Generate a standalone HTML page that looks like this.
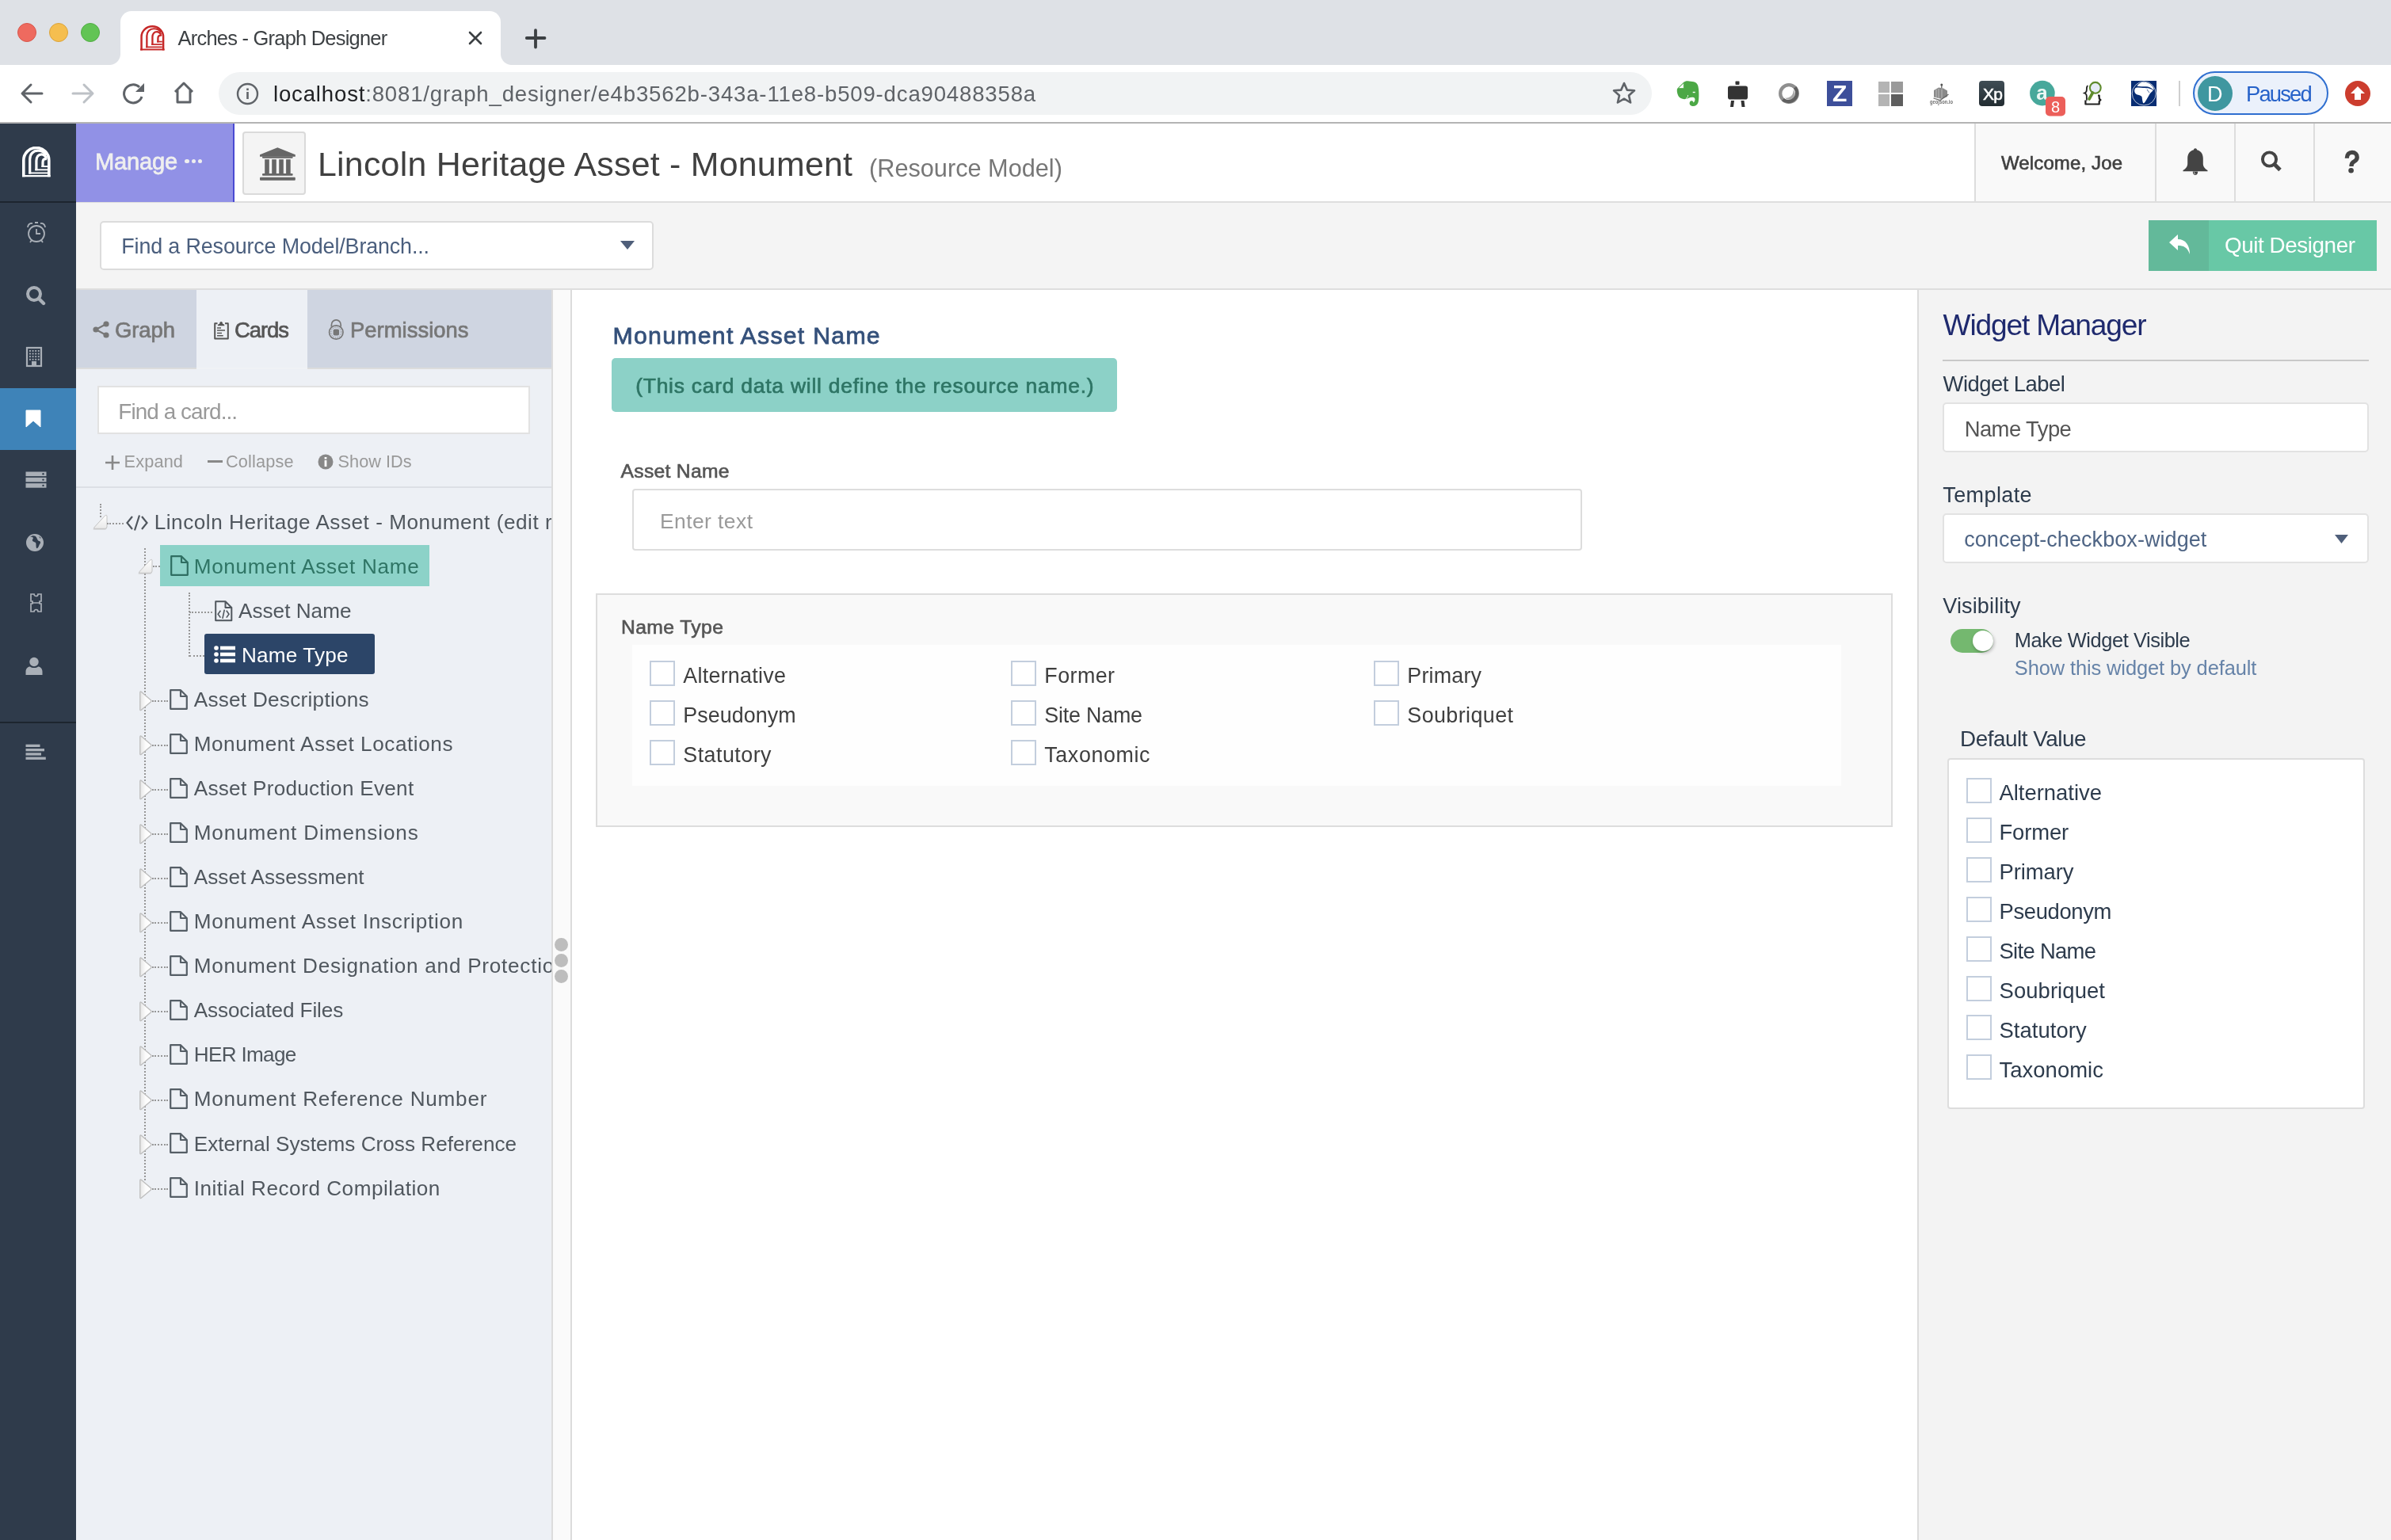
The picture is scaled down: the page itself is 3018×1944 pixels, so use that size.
<!DOCTYPE html><html><head><meta charset="utf-8"><style>
html,body{margin:0;padding:0;width:3018px;height:1944px;overflow:hidden;background:#fff}
#R{position:absolute;left:0;top:0;width:3018px;height:1944px;overflow:hidden;will-change:transform}
#R>div,#R>svg{position:absolute;white-space:nowrap;line-height:normal}
body{font-family:"Liberation Sans",sans-serif}
</style></head><body><div id="R">
<div style="left:0px;top:0px;width:3018px;height:82px;background:#dee1e6;"></div>
<div style="left:22px;top:29px;width:24px;height:24px;border-radius:50%;background:#ee6a5f;box-sizing:border-box;border:1px solid #d8574c"></div>
<div style="left:62px;top:29px;width:24px;height:24px;border-radius:50%;background:#f5be4f;box-sizing:border-box;border:1px solid #dba43b"></div>
<div style="left:102px;top:29px;width:24px;height:24px;border-radius:50%;background:#62c454;box-sizing:border-box;border:1px solid #52ad45"></div>
<div style="left:152px;top:14px;width:480px;height:68px;background:#fff;border-radius:14px 14px 0 0"></div>
<div style="left:138px;top:68px;width:14px;height:14px;background:radial-gradient(circle at 0 0,transparent 13.5px,#fff 14.5px)"></div>
<div style="left:632px;top:68px;width:14px;height:14px;background:radial-gradient(circle at 100% 0,transparent 13.5px,#fff 14.5px)"></div>
<svg style="left:176.5px;top:31.5px;" width="31" height="32" viewBox="0 0 36 39" preserveAspectRatio="none"><g fill="none" stroke="#c62828">
<path d="M1.8 38.3 V17.45 A16 16 0 0 1 33.8 17.45 V38.3" stroke-width="2.9"/>
<path d="M0 37.2 H35.6" stroke-width="2.4"/>
<path d="M9.7 34.4 V16 C9.7 9.5 14 5.2 20 5.2 C24.5 5.2 28.5 7.5 30.6 10.6" stroke-width="2.7"/>
<path d="M8.1 33.4 H32.2" stroke-width="2.1"/>
<path d="M17.9 30.3 V18 C17.9 13 20.5 9.8 24.5 9.8 C27 9.8 29 11.5 30.6 14.2" stroke-width="2.7"/>
<path d="M16.3 29.3 H32.2" stroke-width="2.1"/>
<path d="M26 26.1 V20 C26 17 27.6 15.3 30 15.3 L31.3 15.9" stroke-width="2.7"/>
<path d="M24.4 25.1 H32.2" stroke-width="2.1"/>
</g></svg>
<div style="left:224.60px;top:33.50px;font-size:25.43px;font-weight:400;color:#3c4043;letter-spacing:-0.752px;">Arches - Graph Designer</div>
<svg style="left:590px;top:38px;" width="20" height="20" viewBox="0 0 20 20" preserveAspectRatio="none"><path d="M3 3 L17 17 M17 3 L3 17" stroke="#3c4043" stroke-width="2.6" stroke-linecap="round"/></svg>
<svg style="left:662px;top:34px;" width="28" height="28" viewBox="0 0 28 28" preserveAspectRatio="none"><path d="M14 4.2 V25.5 M2.8 14 H25.5" stroke="#3c4043" stroke-width="3.8" stroke-linecap="round"/></svg>
<div style="left:0px;top:82px;width:3018px;height:72px;background:#fff;"></div>
<div style="left:0px;top:154px;width:3018px;height:2px;background:#b4b4b4;"></div>
<svg style="left:24px;top:102px;" width="32" height="32" viewBox="0 0 32 32" preserveAspectRatio="none"><path d="M29 16 H5 M15 5 L4 16 L15 27" fill="none" stroke="#5f6368" stroke-width="3" stroke-linecap="round" stroke-linejoin="round"/></svg>
<svg style="left:89px;top:102px;" width="32" height="32" viewBox="0 0 32 32" preserveAspectRatio="none"><path d="M3 16 H27 M17 5 L28 16 L17 27" fill="none" stroke="#bdc1c6" stroke-width="3" stroke-linecap="round" stroke-linejoin="round"/></svg>
<svg style="left:152px;top:102px;" width="34" height="34" viewBox="0 0 34 34" preserveAspectRatio="none"><path d="M27 20 A11.5 11.5 0 1 1 24 8" fill="none" stroke="#5f6368" stroke-width="3"/><path d="M30 3 V14 H19 Z" fill="#5f6368"/></svg>
<svg style="left:216px;top:102px;" width="32" height="32" viewBox="0 0 32 32" preserveAspectRatio="none"><path d="M5 14 L16 3 L27 14 M8 12 V27 H24 V12" fill="none" stroke="#5f6368" stroke-width="3" stroke-linejoin="round"/></svg>
<div style="left:276px;top:91px;width:1809px;height:54px;border-radius:27px;background:#f1f3f4"></div>
<svg style="left:298px;top:104px;" width="29" height="29" viewBox="0 0 29 29" preserveAspectRatio="none"><circle cx="14.5" cy="14.5" r="12.5" fill="none" stroke="#5f6368" stroke-width="2.4"/><rect x="13.2" y="12" width="2.6" height="9" fill="#5f6368"/><rect x="13.2" y="7.5" width="2.6" height="2.6" fill="#5f6368"/></svg>
<div style="left:345.00px;top:102.60px;font-size:27.60px;font-weight:400;color:#202124;letter-spacing:0.813px;">localhost<span style="color:#5f6368">:8081/graph_designer/e4b3562b-343a-11e8-b509-dca90488358a</span></div>
<svg style="left:2034px;top:102px;" width="32" height="32" viewBox="0 0 32 32" preserveAspectRatio="none"><path d="M16 3 L19.8 11.6 L29 12.3 L22 18.4 L24.1 27.5 L16 22.7 L7.9 27.5 L10 18.4 L3 12.3 L12.2 11.6 Z" fill="none" stroke="#5f6368" stroke-width="2.6" stroke-linejoin="round"/></svg>
<svg style="left:2115px;top:101px;" width="31" height="34" viewBox="0 0 31 34" preserveAspectRatio="none"><path d="M2 11 L10 3 C12 1 15 0.8 17 1.5 C23 1.8 27 3 28.2 7 C29.8 13 29.6 24 28.6 28 C27.6 32 24 33.6 21 33 C17.5 32.4 16.5 28.6 19 26.6 C20.6 25.5 23 26.6 22.2 28.6 C25.2 27 25 23 23 22 C19 21 15.5 23.2 13 24 C9 24.6 5 23.2 3.4 20 C1.6 16 1.5 13 2 11 Z" fill="#4ca846"/><path d="M3.2 10.6 L10.3 3.6 V10.6 Z" fill="#fff" stroke="#4ca846" stroke-width="0.8"/><rect x="21.7" y="14.8" width="3" height="1.4" fill="#fff"/><path d="M12.5 24.2 C14.5 22.5 16 21 15.5 19" fill="none" stroke="#fff" stroke-width="0.9"/></svg>
<svg style="left:2180px;top:102.2px;" width="28" height="34" viewBox="0 0 28 34" preserveAspectRatio="none"><rect x="10.5" y="0.5" width="5" height="4.5" rx="0.8" fill="#333"/><rect x="1" y="6.5" width="25" height="17" rx="2.8" fill="#333"/><path d="M5 25 L4 33 H8 L9 25 Z M17.5 25 L18.5 33 H22.5 L21.5 25 Z" fill="#333"/></svg>
<svg style="left:2244px;top:104px;" width="28" height="28" viewBox="0 0 28 28" preserveAspectRatio="none"><circle cx="14" cy="14" r="10.8" fill="none" stroke="#8f8f8f" stroke-width="4.3"/><path d="M21.6 6.4 A10.8 10.8 0 0 1 6.4 21.6" fill="none" stroke="#606060" stroke-width="4.3"/><path d="M19.5 9 A7 7 0 0 1 9 19.5 A9 9 0 0 0 19.5 9 Z" fill="#a8a8a8"/></svg>
<div style="left:2306px;top:102px;width:32px;height:32px;background:#3d4f9a;"></div>
<div style="left:2313.00px;top:101.00px;font-size:30.00px;font-weight:700;color:#fff;letter-spacing:0.000px;">Z</div>
<svg style="left:2371px;top:102px;" width="31" height="32" viewBox="0 0 31 32" preserveAspectRatio="none"><rect x="0" y="1" width="14" height="14" fill="#b4b4b4"/><rect x="16" y="1" width="15" height="14" fill="#9a9a9a"/><rect x="0" y="17" width="14" height="15" fill="#b4b4b4"/><rect x="16" y="17" width="15" height="15" fill="#5e5e5e"/></svg>
<svg style="left:2434px;top:103px;" width="33" height="30" viewBox="0 0 33 30" preserveAspectRatio="none"><circle cx="16.8" cy="4" r="1.5" fill="#555"/><path d="M16.8 4 V8" stroke="#555" stroke-width="1.2"/><path d="M7 11 L13 7.5 L19 8.5 L24 11.5 V19 L17 22 L7 19.5 Z" fill="#8a8a8a"/><path d="M13 9 V21 M17 9.5 V22 M10 10 V20" stroke="#c8c8c8" stroke-width="0.8"/><path d="M6.5 21 L15 23.5 L25.5 16" fill="none" stroke="#666" stroke-width="1.2"/><text x="2" y="28.3" font-size="8" fill="#6f6f6f" textLength="29" lengthAdjust="spacingAndGlyphs" font-family="Liberation Sans" font-weight="700">geojson.io</text></svg>
<div style="left:2498px;top:102px;width:32px;height:32px;border-radius:4px;background:linear-gradient(#404d55,#222c31)"></div>
<div style="left:2502.90px;top:106.50px;font-size:21.00px;font-weight:400;color:#fff;letter-spacing:-0.772px;-webkit-text-stroke:0.55px #fff;">Xp</div>
<svg style="left:2561px;top:101px;" width="46" height="46" viewBox="0 0 46 46" preserveAspectRatio="none"><circle cx="16.9" cy="16.6" r="15.8" fill="#47a89b"/><text x="16.5" y="25" font-size="26" fill="#eaf7f4" text-anchor="middle" font-family="Liberation Sans" font-weight="700">a</text><rect x="21" y="21" width="25" height="24.5" rx="5" fill="#ec5f5a"/><text x="33.5" y="41" font-size="20" fill="#fff" text-anchor="middle" font-family="Liberation Sans">8</text></svg>
<svg style="left:2629px;top:102px;" width="26" height="32" viewBox="0 0 26 32" preserveAspectRatio="none"><path d="M6.5 6.5 C4.5 6.5 5 9 4.8 12 C4.6 14.5 3.5 15 2 15.5 C3.5 16 4.6 16.6 4.8 19 C5 22 4.5 24.5 5.5 24.5" fill="none" stroke="#222" stroke-width="1.8"/><path d="M3.4 24.6 V29.5 H20.7 V26 C21.2 24.5 22.5 24.5 22.5 24 C21 23.6 20.7 23 20.7 21 V18.5 H19" fill="none" stroke="#222" stroke-width="2.2" stroke-linejoin="round"/><circle cx="15.8" cy="8.8" r="6.9" fill="#e6ecf7" stroke="#5f8b2d" stroke-width="2.1"/><path d="M12.5 15 L8 23" stroke="#5f8b2d" stroke-width="3.6" stroke-linecap="round"/></svg>
<div style="left:2690px;top:102px;width:32px;height:32px;background:#082d73;"></div>
<svg style="left:2690px;top:102px;" width="32" height="32" viewBox="0 0 32 32" preserveAspectRatio="none"><circle cx="16.2" cy="16" r="15" fill="none" stroke="#fff" stroke-width="0.7"/><path d="M5.6 9 C8 8.2 12 8.5 15 9 C18 9.2 21 9 23 9.8 C25 10.5 27 11 27.8 12 C26 14 24 15.5 23 17.5 C21.5 20 20 23 18 26 C17 28 15.5 28.6 15 28 C14 25 14 22 13.5 20 C12 18.5 9.5 17.8 7 17.2 C5 16.5 4 14 4.2 12 C4.4 10.5 5 9.5 5.6 9 Z" fill="#fff"/><path d="M7.5 6.8 C9 4 12 2 15 1.8 C19 1.6 23 3 26 6 C27.5 7.5 28.5 9.5 29 11.5 L27 10.5 C25 8.5 22 7.5 19 7.3 C15 7 11 7.5 7.5 6.8 Z" fill="#fff"/><path d="M20 11 L23 15" stroke="#082d73" stroke-width="0.7"/></svg>
<div style="left:2750px;top:102px;width:2px;height:32px;background:#cfcfcf;"></div>
<div style="left:2768px;top:90px;width:171px;height:55px;box-sizing:border-box;border:2.5px solid #2f6fd0;border-radius:28px;background:#ebf1fb"></div>
<div style="left:2774px;top:96px;width:44px;height:44px;border-radius:50%;background:#3f97a0"></div>
<div style="left:2786.00px;top:104.00px;font-size:27.00px;font-weight:400;color:#fff;letter-spacing:0.000px;">D</div>
<div style="left:2835.00px;top:102.80px;font-size:27.43px;font-weight:400;color:#2662c9;letter-spacing:-1.850px;">Paused</div>
<div style="left:2960px;top:102px;width:32px;height:32px;border-radius:50%;background:#cc3d2e"></div>
<svg style="left:2960px;top:102px;" width="32" height="32" viewBox="0 0 32 32" preserveAspectRatio="none"><path d="M16 7 L25 16 H20 V24 H12 V16 H7 Z" fill="#fff"/></svg>
<svg style="left:0;top:0" width="0" height="0"><defs><linearGradient id="tg" x1="0" y1="0" x2="0" y2="1"><stop offset="0" stop-color="#ffffff"/><stop offset="1" stop-color="#e9e9e9"/></linearGradient><linearGradient id="tg2" x1="0" y1="0" x2="1" y2="0"><stop offset="0" stop-color="#e6e6e6"/><stop offset="0.5" stop-color="#fcfcfc"/><stop offset="1" stop-color="#ffffff"/></linearGradient></defs></svg>
<div style="left:0px;top:156px;width:96px;height:1788px;background:#2f3b4b;"></div>
<div style="left:0px;top:254px;width:96px;height:2px;background:#1d252f;"></div>
<div style="left:0px;top:490px;width:96px;height:78px;background:#3e83b8;"></div>
<div style="left:0px;top:911px;width:96px;height:2px;background:#1d252f;"></div>
<svg style="left:28px;top:184.7px;" width="36" height="39" viewBox="0 0 36 39" preserveAspectRatio="none"><g fill="none" stroke="#ffffff">
<path d="M1.8 38.3 V17.45 A16 16 0 0 1 33.8 17.45 V38.3" stroke-width="3.6"/>
<path d="M0 37.2 H35.6" stroke-width="2.1999999999999997"/>
<path d="M9.7 34.4 V16 C9.7 9.5 14 5.2 20 5.2 C24.5 5.2 28.5 7.5 30.6 10.6" stroke-width="3.2"/>
<path d="M8.1 33.4 H32.2" stroke-width="1.9"/>
<path d="M17.9 30.3 V18 C17.9 13 20.5 9.8 24.5 9.8 C27 9.8 29 11.5 30.6 14.2" stroke-width="3.2"/>
<path d="M16.3 29.3 H32.2" stroke-width="1.9"/>
<path d="M26 26.1 V20 C26 17 27.6 15.3 30 15.3 L31.3 15.9" stroke-width="3.2"/>
<path d="M24.4 25.1 H32.2" stroke-width="1.9"/>
</g></svg>
<svg style="left:33px;top:280px;" width="26" height="28" viewBox="0 0 26 28" preserveAspectRatio="none"><circle cx="13" cy="15" r="10" fill="none" stroke="#a9afb7" stroke-width="1.8"/><path d="M13 9 V15 H18" fill="none" stroke="#a9afb7" stroke-width="1.8"/><path d="M2 7 A5 5 0 0 1 8 2 M18 2 A5 5 0 0 1 24 7 M11 1 H15 M5 26 L7 23 M21 26 L19 23" fill="none" stroke="#a9afb7" stroke-width="1.8"/></svg>
<svg style="left:32px;top:360px;" width="26" height="27" viewBox="0 0 26 27" preserveAspectRatio="none"><circle cx="11" cy="11" r="8" fill="none" stroke="#a9afb7" stroke-width="4"/><path d="M17 17 L23 23" stroke="#a9afb7" stroke-width="4.4" stroke-linecap="round"/></svg>
<svg style="left:32px;top:437px;" width="22" height="27" viewBox="0 0 22 27" preserveAspectRatio="none"><rect x="2" y="2" width="18" height="23" fill="none" stroke="#a9afb7" stroke-width="2.2"/><rect x="5.0" y="5.0" width="1.9" height="1.9" fill="#a9afb7"/><rect x="5.0" y="8.6" width="1.9" height="1.9" fill="#a9afb7"/><rect x="5.0" y="12.2" width="1.9" height="1.9" fill="#a9afb7"/><rect x="5.0" y="15.8" width="1.9" height="1.9" fill="#a9afb7"/><rect x="8.6" y="5.0" width="1.9" height="1.9" fill="#a9afb7"/><rect x="8.6" y="8.6" width="1.9" height="1.9" fill="#a9afb7"/><rect x="8.6" y="12.2" width="1.9" height="1.9" fill="#a9afb7"/><rect x="8.6" y="15.8" width="1.9" height="1.9" fill="#a9afb7"/><rect x="12.2" y="5.0" width="1.9" height="1.9" fill="#a9afb7"/><rect x="12.2" y="8.6" width="1.9" height="1.9" fill="#a9afb7"/><rect x="12.2" y="12.2" width="1.9" height="1.9" fill="#a9afb7"/><rect x="12.2" y="15.8" width="1.9" height="1.9" fill="#a9afb7"/><rect x="15.8" y="5.0" width="1.9" height="1.9" fill="#a9afb7"/><rect x="15.8" y="8.6" width="1.9" height="1.9" fill="#a9afb7"/><rect x="15.8" y="12.2" width="1.9" height="1.9" fill="#a9afb7"/><rect x="15.8" y="15.8" width="1.9" height="1.9" fill="#a9afb7"/><rect x="8" y="19" width="6" height="5" fill="#a9afb7"/></svg>
<svg style="left:32px;top:517px;" width="20" height="23" viewBox="0 0 20 23" preserveAspectRatio="none"><path d="M1 1 H19 V22 L10 14 L1 22 Z" fill="#fff" stroke="#fff" stroke-width="1" stroke-linejoin="round"/></svg>
<svg style="left:32px;top:595px;" width="27" height="22" viewBox="0 0 27 22" preserveAspectRatio="none"><rect x="0.5" y="0.5" width="26" height="5.6" fill="#a9afb7"/><circle cx="22.5" cy="3.3" r="1.2" fill="#2f3b4b"/><rect x="0.5" y="7.8" width="26" height="5.6" fill="#a9afb7"/><circle cx="22.5" cy="10.6" r="1.2" fill="#2f3b4b"/><rect x="0.5" y="15.1" width="26" height="5.6" fill="#a9afb7"/><circle cx="22.5" cy="17.9" r="1.2" fill="#2f3b4b"/></svg>
<svg style="left:32px;top:673px;" width="24" height="24" viewBox="0 0 24 24" preserveAspectRatio="none"><circle cx="12" cy="12" r="11" fill="#a9afb7"/><path d="M6 5 C9 4 11 6 9 8 C8 10 11 11 13 12 C14 14 13 16 14 19 C16 20 17 16 18 14 C20 12 19 10 17 10 C15 9 15 6 13 4 C11 3 8 3 6 5 Z M17 4 C19 5 20 6 19 7" fill="#2f3b4b"/></svg>
<svg style="left:38px;top:749px;" width="15" height="24" viewBox="0 0 15 24" preserveAspectRatio="none"><path d="M1 1 H5 A2.5 2.5 0 0 0 10 1 H14 V10 H12 V13 H14 V23 H10 A2.5 2.5 0 0 0 5 23 H1 V13 H3 V10 H1 Z" fill="none" stroke="#a9afb7" stroke-width="1.7"/><path d="M2 12 H13" stroke="#a9afb7" stroke-width="1.5"/></svg>
<svg style="left:32px;top:829px;" width="22" height="24" viewBox="0 0 22 24" preserveAspectRatio="none"><circle cx="11" cy="6.5" r="5.7" fill="#a9afb7"/><path d="M0.5 23 V19 C0.5 14 4 12.5 6 12.5 C8 14.5 14 14.5 16 12.5 C18 12.5 21.5 14 21.5 19 V23 Z" fill="#a9afb7"/></svg>
<svg style="left:32px;top:939px;" width="27" height="23" viewBox="0 0 27 23" preserveAspectRatio="none"><rect x="0.5" y="0.7" width="18" height="3.3" fill="#a9afb7"/><rect x="0.5" y="6.0" width="23.5" height="3.3" fill="#a9afb7"/><rect x="0.5" y="11.299999999999999" width="19.5" height="3.3" fill="#a9afb7"/><rect x="0.5" y="16.599999999999998" width="25.3" height="3.3" fill="#a9afb7"/></svg>
<div style="left:96px;top:156px;width:2922px;height:98px;background:#fff;"></div>
<div style="left:96px;top:254px;width:2922px;height:2px;background:#dedede;"></div>
<div style="left:96px;top:156px;width:198px;height:99px;background:#9191e6;"></div>
<div style="left:294px;top:156px;width:2px;height:99px;background:#4a4ad2;"></div>
<div style="left:119.90px;top:188.20px;font-size:29.14px;font-weight:400;color:#efefef;letter-spacing:-0.170px;-webkit-text-stroke:0.76px #efefef;">Manage</div>
<div style="left:233.3px;top:200.5px;width:5.4px;height:5.4px;border-radius:50%;background:#efefef"></div>
<div style="left:241.8px;top:200.5px;width:5.4px;height:5.4px;border-radius:50%;background:#efefef"></div>
<div style="left:249.8px;top:200.5px;width:5.4px;height:5.4px;border-radius:50%;background:#efefef"></div>
<div style="left:306px;top:166px;width:80px;height:80px;box-sizing:border-box;border:2px solid #dadada;border-radius:4px;background:#f4f4f4"></div>
<svg style="left:327px;top:185px;" width="47" height="44" viewBox="0 0 47 44" preserveAspectRatio="none"><path d="M23.3 1.3 L45.8 10.3 V12.7 H1 V10.3 Z" fill="#666"/><rect x="4" y="12.5" width="38.6" height="2.2" rx="1" fill="#666"/><rect x="7.2" y="16.2" width="5.6" height="18" fill="#666"/><rect x="16.2" y="16.2" width="5.6" height="18" fill="#666"/><rect x="25.2" y="16.2" width="5.6" height="18" fill="#666"/><rect x="34.1" y="16.2" width="5.6" height="18" fill="#666"/><rect x="4" y="34" width="38.6" height="2.8" rx="1" fill="#666"/><rect x="1" y="38.7" width="44.8" height="4.1" rx="1" fill="#666"/></svg>
<div style="left:401.00px;top:183.00px;font-size:42.86px;font-weight:400;color:#404040;letter-spacing:0.248px;">Lincoln Heritage Asset - Monument</div>
<div style="left:1097.00px;top:195.00px;font-size:30.71px;font-weight:400;color:#777777;letter-spacing:-0.007px;">(Resource Model)</div>
<div style="left:2494px;top:156px;width:524px;height:98px;background:#f9f9f9;"></div>
<div style="left:2492px;top:156px;width:2px;height:98px;background:#dddddd;"></div>
<div style="left:2720px;top:156px;width:2px;height:98px;background:#dddddd;"></div>
<div style="left:2820px;top:156px;width:2px;height:98px;background:#dddddd;"></div>
<div style="left:2920px;top:156px;width:2px;height:98px;background:#dddddd;"></div>
<div style="left:2526.00px;top:191.80px;font-size:24.00px;font-weight:400;color:#404040;letter-spacing:0.125px;-webkit-text-stroke:0.62px #404040;">Welcome, Joe</div>
<svg style="left:2754px;top:186px;" width="34" height="36" viewBox="0 0 34 36" preserveAspectRatio="none"><path d="M17 1.2 C18.6 1.2 19 2.3 19 3.3 C24.2 4.4 26.8 8.6 26.8 14 V20.5 C26.8 24.5 29.2 27 32.5 29 V30.3 H1.5 V29 C4.8 27 7.2 24.5 7.2 20.5 V14 C7.2 8.6 9.8 4.4 15 3.3 C15 2.3 15.4 1.2 17 1.2 Z" fill="#444"/><path d="M13.8 30.5 C13.8 33.5 15.5 35 17 35 C18.5 35 20.2 33.5 20.2 30.5 Z" fill="#444"/><path d="M15.5 31.5 C15.5 33 16.3 33.6 17.2 33.8" fill="none" stroke="#fafafa" stroke-width="0.9"/></svg>
<svg style="left:2853px;top:189px;" width="30" height="30" viewBox="0 0 30 30" preserveAspectRatio="none"><circle cx="11.5" cy="12" r="8.6" fill="none" stroke="#444" stroke-width="3.9"/><path d="M17.5 18 L25 25.5" stroke="#444" stroke-width="5"/></svg>
<svg style="left:2950px;top:186.5px;" width="34" height="36" viewBox="0 0 34 36" preserveAspectRatio="none"><path d="M12.3 12.8 C12.3 7.6 15.3 5.4 18.8 5.4 C22.8 5.4 25.2 8 25.2 11.4 C25.2 15.2 22.3 16.2 20.3 17.7 C18.7 18.9 18 20.2 18 23" fill="none" stroke="#444" stroke-width="5.3"/><circle cx="17.6" cy="28.3" r="3.3" fill="#444"/></svg>
<div style="left:96px;top:256px;width:2922px;height:108px;background:#f4f4f4;"></div>
<div style="left:96px;top:364px;width:2922px;height:2px;background:#dedede;"></div>
<div style="left:126px;top:279px;width:699px;height:62px;box-sizing:border-box;border:2px solid #dcdcdc;border-radius:5px;background:#fff"></div>
<div style="left:153.30px;top:295.80px;font-size:26.86px;font-weight:400;color:#4a5e7d;letter-spacing:-0.129px;">Find a Resource Model/Branch...</div>
<svg style="left:783px;top:304px;" width="18" height="11" viewBox="0 0 18 11" preserveAspectRatio="none"><path d="M0 0 H18 L9 11 Z" fill="#4f5f7a"/></svg>
<div style="left:2712px;top:278px;width:288px;height:64px;background:#68c8a6;"></div>
<div style="left:2712px;top:278px;width:76px;height:64px;background:#63b99a;"></div>
<svg style="left:2737px;top:295px;" width="30" height="27" viewBox="0 0 30 27" preserveAspectRatio="none"><path d="M12 1 L1 11 L12 21 V15 C19 15 24 17 27 26 C27 15 22 7 12 7 Z" fill="#fff"/></svg>
<div style="left:2808.00px;top:294.30px;font-size:27.86px;font-weight:400;color:#ffffff;letter-spacing:-0.446px;">Quit Designer</div>
<div style="left:96px;top:366px;width:600px;height:1578px;background:#edf0f5;"></div>
<div style="left:96px;top:366px;width:152px;height:99px;background:#cfd5e1;"></div>
<div style="left:388px;top:366px;width:308px;height:99px;background:#cfd5e1;"></div>
<div style="left:96px;top:464px;width:152px;height:2px;background:#dcdcdc;"></div>
<div style="left:388px;top:464px;width:308px;height:2px;background:#dcdcdc;"></div>
<div style="left:248px;top:464px;width:140px;height:2px;background:#f0f2f5;"></div>
<div style="left:696px;top:366px;width:2px;height:1578px;background:#dcdcdc;"></div>
<div style="left:698px;top:366px;width:22px;height:1578px;background:#fafafa;"></div>
<div style="left:720px;top:366px;width:2px;height:1578px;background:#dcdcdc;"></div>
<div style="left:700.1px;top:1184.1999999999998px;width:16.8px;height:16.8px;border-radius:50%;background:#bdbdbd"></div>
<div style="left:700.1px;top:1204.3px;width:16.8px;height:16.8px;border-radius:50%;background:#bdbdbd"></div>
<div style="left:700.1px;top:1224.3px;width:16.8px;height:16.8px;border-radius:50%;background:#bdbdbd"></div>
<svg style="left:117px;top:405px;" width="22" height="22" viewBox="0 0 22 22" preserveAspectRatio="none"><circle cx="17" cy="4" r="3.6" fill="#777"/><circle cx="4" cy="11" r="3.6" fill="#777"/><circle cx="17" cy="18" r="3.6" fill="#777"/><path d="M17 4 L4 11 L17 18" fill="none" stroke="#777" stroke-width="2.2"/></svg>
<div style="left:145.00px;top:401.00px;font-size:27.43px;font-weight:400;color:#777;letter-spacing:-0.063px;-webkit-text-stroke:0.71px #777;">Graph</div>
<svg style="left:269px;top:404px;" width="22" height="26" viewBox="0 0 22 26" preserveAspectRatio="none"><path d="M5.5 4.2 H2.2 V23.4 H18.8 V4.2 H15" fill="none" stroke="#555" stroke-width="2" stroke-linejoin="round"/><path d="M5.8 7.3 H14.4 C14.4 5.6 13.4 4.7 12 4.7 C12 3 11.3 2 10.1 2 C8.9 2 8.2 3 8.2 4.7 C6.8 4.7 5.8 5.6 5.8 7.3 Z" fill="#555"/><path d="M5 9.9 H10 M5 13.1 H15 M5 16.5 H11 M5 19.7 H12.7" stroke="#555" stroke-width="1.5"/></svg>
<div style="left:296.00px;top:401.00px;font-size:27.43px;font-weight:400;color:#555555;letter-spacing:-1.041px;-webkit-text-stroke:0.71px #555555;">Cards</div>
<svg style="left:413px;top:402px;" width="22" height="28" viewBox="0 0 22 28" preserveAspectRatio="none"><path d="M5.4 10.5 V8.2 A5.9 6.4 0 0 1 17.2 8.2 V10.5" fill="none" stroke="#777" stroke-width="1.7"/><circle cx="11.3" cy="17.5" r="8.7" fill="#cfd5e1" stroke="#777" stroke-width="1.7"/><circle cx="11.3" cy="17.5" r="6.4" fill="none" stroke="#777" stroke-width="0.9" stroke-dasharray="1.2 1.3"/><rect x="7.6" y="13.6" width="7.5" height="8" rx="2" fill="#777"/></svg>
<div style="left:442.00px;top:401.00px;font-size:27.43px;font-weight:400;color:#777;letter-spacing:0.025px;-webkit-text-stroke:0.71px #777;">Permissions</div>
<div style="left:123px;top:487px;width:546px;height:61px;box-sizing:border-box;border:2px solid #e2e2e2;background:#fff"></div>
<div style="left:149.30px;top:503.60px;font-size:27.86px;font-weight:400;color:#999999;letter-spacing:-0.911px;">Find a card...</div>
<svg style="left:132px;top:574px;" width="20" height="20" viewBox="0 0 20 20" preserveAspectRatio="none"><path d="M10 1 V19 M1 10 H19" stroke="#888" stroke-width="2.6"/></svg>
<div style="left:156.60px;top:570.00px;font-size:21.71px;font-weight:400;color:#999999;letter-spacing:0.147px;">Expand</div>
<div style="left:262px;top:581px;width:19px;height:3px;background:#888;"></div>
<div style="left:285.00px;top:570.00px;font-size:21.71px;font-weight:400;color:#999999;letter-spacing:0.154px;">Collapse</div>
<svg style="left:401px;top:573px;" width="20" height="20" viewBox="0 0 20 20" preserveAspectRatio="none"><circle cx="10" cy="10" r="9.5" fill="#888"/><rect x="8.6" y="8" width="2.8" height="8" fill="#fff"/><rect x="8.6" y="4" width="2.8" height="2.6" fill="#fff"/></svg>
<div style="left:426.60px;top:570.00px;font-size:21.71px;font-weight:400;color:#999999;letter-spacing:0.009px;">Show IDs</div>
<div style="left:96px;top:614px;width:600px;height:2px;background:#dcdfe5;"></div>
<div style="left:722px;top:366px;width:1698px;height:1578px;background:#ffffff;"></div>
<div style="left:2420px;top:366px;width:2px;height:1578px;background:#dcdcdc;"></div>
<div style="left:2422px;top:366px;width:596px;height:1578px;background:#f3f3f3;"></div>
<div style="left:126px;top:636px;width:0;height:17px;border-left:2px dotted #979797"></div>
<svg style="left:116px;top:647.5px;" width="21" height="21" viewBox="0 0 21 21" preserveAspectRatio="none"><path d="M19.2 4 V17 Q19.2 19.8 16.5 19.8 H4 Q0.8 19.8 3 17.5 L16 3.2 Q19.2 0.5 19.2 4 Z" fill="#bdbdbd" transform="translate(-0.6,0.9)" opacity="0.55"/><path d="M19 4 V17 Q19 19.3 16.5 19.3 H4.2 Q1.5 19.3 3.3 17.3 L16 3.5 Q19 0.8 19 4 Z" fill="url(#tg)" stroke="#c4c4c4" stroke-width="1"/></svg>
<div style="left:135px;top:660px;width:21px;height:0;border-top:2px dotted #979797"></div>
<svg style="left:159px;top:649px;" width="28" height="22" viewBox="0 0 28 22" preserveAspectRatio="none"><path d="M8 3 L1.5 11 L8 19 M20 3 L26.5 11 L20 19 M17 1.5 L11 20.5" fill="none" stroke="#50575e" stroke-width="2.2"/></svg>
<div style="left:96px;top:630px;width:600px;height:60px;overflow:hidden">
<div style="left:98.70px;top:13.94px;font-size:26.14px;font-weight:400;color:#50575e;letter-spacing:0.534px;position:absolute;">Lincoln Heritage Asset - Monument (edit resource model)</div>
</div>
<div style="left:182px;top:692px;width:0;height:798px;border-left:2px dotted #979797"></div>
<div style="left:202px;top:688px;width:340px;height:52px;background:#8cd2c8;"></div>
<svg style="left:172.5px;top:703.5px;" width="21" height="21" viewBox="0 0 21 21" preserveAspectRatio="none"><path d="M19.2 4 V17 Q19.2 19.8 16.5 19.8 H4 Q0.8 19.8 3 17.5 L16 3.2 Q19.2 0.5 19.2 4 Z" fill="#bdbdbd" transform="translate(-0.6,0.9)" opacity="0.55"/><path d="M19 4 V17 Q19 19.3 16.5 19.3 H4.2 Q1.5 19.3 3.3 17.3 L16 3.5 Q19 0.8 19 4 Z" fill="url(#tg)" stroke="#c4c4c4" stroke-width="1"/></svg>
<div style="left:193px;top:714px;width:9px;height:0;border-top:2px dotted #979797"></div>
<svg style="left:215px;top:701px;" width="23" height="26" viewBox="0 0 23 26" preserveAspectRatio="none"><path d="M1.2 1.2 H14 L21.8 9 V24.8 H1.2 Z M14 1.2 V9 H21.8" fill="none" stroke="#2f6e62" stroke-width="2.2" stroke-linejoin="round"/></svg>
<div style="left:244.70px;top:699.98px;font-size:26.14px;font-weight:400;color:#2f7565;letter-spacing:0.697px;">Monument Asset Name</div>
<div style="left:238px;top:748px;width:0;height:81px;border-left:2px dotted #979797"></div>
<div style="left:239px;top:771.5px;width:29px;height:0;border-top:2px dotted #979797"></div>
<svg style="left:270.5px;top:757.5px;" width="23" height="27" viewBox="0 0 23 27" preserveAspectRatio="none"><path d="M1.2 1.2 H13.5 L21.3 9 V25.3 H1.2 Z M13.5 1.2 V9 H21.3" fill="none" stroke="#50575e" stroke-width="2" stroke-linejoin="round"/><path d="M7.4 12.8 L4.2 17.2 L7.4 21.6 M14.8 12.8 L18 17.2 L14.8 21.6 M12.3 11.6 L9.9 22.8" fill="none" stroke="#50575e" stroke-width="1.6"/></svg>
<div style="left:301.00px;top:756.02px;font-size:26.14px;font-weight:400;color:#50575e;letter-spacing:0.021px;">Asset Name</div>
<div style="left:239px;top:827px;width:19px;height:0;border-top:2px dotted #979797"></div>
<div style="left:258px;top:800px;width:215px;height:51px;background:#2c4568;border-radius:3px"></div>
<svg style="left:270px;top:815px;" width="28" height="22" viewBox="0 0 28 22" preserveAspectRatio="none"><circle cx="3" cy="3" r="2.8" fill="#fff"/><rect x="8" y="0.7" width="19" height="4.6" fill="#fff"/><circle cx="3" cy="11" r="2.8" fill="#fff"/><rect x="8" y="8.7" width="19" height="4.6" fill="#fff"/><circle cx="3" cy="19" r="2.8" fill="#fff"/><rect x="8" y="16.7" width="19" height="4.6" fill="#fff"/></svg>
<div style="left:304.90px;top:812.06px;font-size:26.14px;font-weight:400;color:#ffffff;letter-spacing:0.200px;">Name Type</div>
<svg style="left:174.6px;top:870.8000000000001px;" width="19" height="28" viewBox="0 0 19 28" preserveAspectRatio="none"><path d="M3.2 2.2 Q1.8 1.2 1.8 3.2 V24.4 Q1.8 26.4 3.3 25.2 L15.4 14.9 Q16.6 13.8 15.4 12.8 Z" fill="url(#tg2)" stroke="#bdbdbd" stroke-width="1.3" stroke-linejoin="round"/></svg>
<div style="left:192px;top:883.6px;width:20px;height:0;border-top:2px dotted #979797"></div>
<svg style="left:214px;top:869.6px;" width="23" height="26" viewBox="0 0 23 26" preserveAspectRatio="none"><path d="M1.2 1.2 H14 L21.8 9 V24.8 H1.2 Z M14 1.2 V9 H21.8" fill="none" stroke="#555e66" stroke-width="2.2" stroke-linejoin="round"/></svg>
<div style="left:244.70px;top:868.10px;font-size:26.14px;font-weight:400;color:#50575e;letter-spacing:0.273px;">Asset Descriptions</div>
<svg style="left:174.6px;top:926.84px;" width="19" height="28" viewBox="0 0 19 28" preserveAspectRatio="none"><path d="M3.2 2.2 Q1.8 1.2 1.8 3.2 V24.4 Q1.8 26.4 3.3 25.2 L15.4 14.9 Q16.6 13.8 15.4 12.8 Z" fill="url(#tg2)" stroke="#bdbdbd" stroke-width="1.3" stroke-linejoin="round"/></svg>
<div style="left:192px;top:939.64px;width:20px;height:0;border-top:2px dotted #979797"></div>
<svg style="left:214px;top:925.64px;" width="23" height="26" viewBox="0 0 23 26" preserveAspectRatio="none"><path d="M1.2 1.2 H14 L21.8 9 V24.8 H1.2 Z M14 1.2 V9 H21.8" fill="none" stroke="#555e66" stroke-width="2.2" stroke-linejoin="round"/></svg>
<div style="left:244.70px;top:924.14px;font-size:26.14px;font-weight:400;color:#50575e;letter-spacing:0.569px;">Monument Asset Locations</div>
<svg style="left:174.6px;top:982.8800000000001px;" width="19" height="28" viewBox="0 0 19 28" preserveAspectRatio="none"><path d="M3.2 2.2 Q1.8 1.2 1.8 3.2 V24.4 Q1.8 26.4 3.3 25.2 L15.4 14.9 Q16.6 13.8 15.4 12.8 Z" fill="url(#tg2)" stroke="#bdbdbd" stroke-width="1.3" stroke-linejoin="round"/></svg>
<div style="left:192px;top:995.6800000000001px;width:20px;height:0;border-top:2px dotted #979797"></div>
<svg style="left:214px;top:981.6800000000001px;" width="23" height="26" viewBox="0 0 23 26" preserveAspectRatio="none"><path d="M1.2 1.2 H14 L21.8 9 V24.8 H1.2 Z M14 1.2 V9 H21.8" fill="none" stroke="#555e66" stroke-width="2.2" stroke-linejoin="round"/></svg>
<div style="left:244.70px;top:980.18px;font-size:26.14px;font-weight:400;color:#50575e;letter-spacing:0.283px;">Asset Production Event</div>
<svg style="left:174.6px;top:1038.92px;" width="19" height="28" viewBox="0 0 19 28" preserveAspectRatio="none"><path d="M3.2 2.2 Q1.8 1.2 1.8 3.2 V24.4 Q1.8 26.4 3.3 25.2 L15.4 14.9 Q16.6 13.8 15.4 12.8 Z" fill="url(#tg2)" stroke="#bdbdbd" stroke-width="1.3" stroke-linejoin="round"/></svg>
<div style="left:192px;top:1051.72px;width:20px;height:0;border-top:2px dotted #979797"></div>
<svg style="left:214px;top:1037.72px;" width="23" height="26" viewBox="0 0 23 26" preserveAspectRatio="none"><path d="M1.2 1.2 H14 L21.8 9 V24.8 H1.2 Z M14 1.2 V9 H21.8" fill="none" stroke="#555e66" stroke-width="2.2" stroke-linejoin="round"/></svg>
<div style="left:244.70px;top:1036.22px;font-size:26.14px;font-weight:400;color:#50575e;letter-spacing:0.885px;">Monument Dimensions</div>
<svg style="left:174.6px;top:1094.96px;" width="19" height="28" viewBox="0 0 19 28" preserveAspectRatio="none"><path d="M3.2 2.2 Q1.8 1.2 1.8 3.2 V24.4 Q1.8 26.4 3.3 25.2 L15.4 14.9 Q16.6 13.8 15.4 12.8 Z" fill="url(#tg2)" stroke="#bdbdbd" stroke-width="1.3" stroke-linejoin="round"/></svg>
<div style="left:192px;top:1107.76px;width:20px;height:0;border-top:2px dotted #979797"></div>
<svg style="left:214px;top:1093.76px;" width="23" height="26" viewBox="0 0 23 26" preserveAspectRatio="none"><path d="M1.2 1.2 H14 L21.8 9 V24.8 H1.2 Z M14 1.2 V9 H21.8" fill="none" stroke="#555e66" stroke-width="2.2" stroke-linejoin="round"/></svg>
<div style="left:244.70px;top:1092.26px;font-size:26.14px;font-weight:400;color:#50575e;letter-spacing:0.094px;">Asset Assessment</div>
<svg style="left:174.6px;top:1151.0px;" width="19" height="28" viewBox="0 0 19 28" preserveAspectRatio="none"><path d="M3.2 2.2 Q1.8 1.2 1.8 3.2 V24.4 Q1.8 26.4 3.3 25.2 L15.4 14.9 Q16.6 13.8 15.4 12.8 Z" fill="url(#tg2)" stroke="#bdbdbd" stroke-width="1.3" stroke-linejoin="round"/></svg>
<div style="left:192px;top:1163.8px;width:20px;height:0;border-top:2px dotted #979797"></div>
<svg style="left:214px;top:1149.8px;" width="23" height="26" viewBox="0 0 23 26" preserveAspectRatio="none"><path d="M1.2 1.2 H14 L21.8 9 V24.8 H1.2 Z M14 1.2 V9 H21.8" fill="none" stroke="#555e66" stroke-width="2.2" stroke-linejoin="round"/></svg>
<div style="left:244.70px;top:1148.30px;font-size:26.14px;font-weight:400;color:#50575e;letter-spacing:0.749px;">Monument Asset Inscription</div>
<svg style="left:174.6px;top:1207.0400000000002px;" width="19" height="28" viewBox="0 0 19 28" preserveAspectRatio="none"><path d="M3.2 2.2 Q1.8 1.2 1.8 3.2 V24.4 Q1.8 26.4 3.3 25.2 L15.4 14.9 Q16.6 13.8 15.4 12.8 Z" fill="url(#tg2)" stroke="#bdbdbd" stroke-width="1.3" stroke-linejoin="round"/></svg>
<div style="left:192px;top:1219.8400000000001px;width:20px;height:0;border-top:2px dotted #979797"></div>
<svg style="left:214px;top:1205.8400000000001px;" width="23" height="26" viewBox="0 0 23 26" preserveAspectRatio="none"><path d="M1.2 1.2 H14 L21.8 9 V24.8 H1.2 Z M14 1.2 V9 H21.8" fill="none" stroke="#555e66" stroke-width="2.2" stroke-linejoin="round"/></svg>
<div style="left:240px;top:1188.3px;width:456px;height:60px;overflow:hidden">
<div style="left:4.70px;top:16.00px;font-size:26.14px;font-weight:400;color:#50575e;letter-spacing:0.749px;position:absolute;">Monument Designation and Protection</div>
</div>
<svg style="left:174.6px;top:1263.0800000000002px;" width="19" height="28" viewBox="0 0 19 28" preserveAspectRatio="none"><path d="M3.2 2.2 Q1.8 1.2 1.8 3.2 V24.4 Q1.8 26.4 3.3 25.2 L15.4 14.9 Q16.6 13.8 15.4 12.8 Z" fill="url(#tg2)" stroke="#bdbdbd" stroke-width="1.3" stroke-linejoin="round"/></svg>
<div style="left:192px;top:1275.88px;width:20px;height:0;border-top:2px dotted #979797"></div>
<svg style="left:214px;top:1261.88px;" width="23" height="26" viewBox="0 0 23 26" preserveAspectRatio="none"><path d="M1.2 1.2 H14 L21.8 9 V24.8 H1.2 Z M14 1.2 V9 H21.8" fill="none" stroke="#555e66" stroke-width="2.2" stroke-linejoin="round"/></svg>
<div style="left:244.70px;top:1260.38px;font-size:26.14px;font-weight:400;color:#50575e;letter-spacing:-0.108px;">Associated Files</div>
<svg style="left:174.6px;top:1319.1200000000001px;" width="19" height="28" viewBox="0 0 19 28" preserveAspectRatio="none"><path d="M3.2 2.2 Q1.8 1.2 1.8 3.2 V24.4 Q1.8 26.4 3.3 25.2 L15.4 14.9 Q16.6 13.8 15.4 12.8 Z" fill="url(#tg2)" stroke="#bdbdbd" stroke-width="1.3" stroke-linejoin="round"/></svg>
<div style="left:192px;top:1331.92px;width:20px;height:0;border-top:2px dotted #979797"></div>
<svg style="left:214px;top:1317.92px;" width="23" height="26" viewBox="0 0 23 26" preserveAspectRatio="none"><path d="M1.2 1.2 H14 L21.8 9 V24.8 H1.2 Z M14 1.2 V9 H21.8" fill="none" stroke="#555e66" stroke-width="2.2" stroke-linejoin="round"/></svg>
<div style="left:244.70px;top:1316.42px;font-size:26.14px;font-weight:400;color:#50575e;letter-spacing:-0.674px;">HER Image</div>
<svg style="left:174.6px;top:1375.16px;" width="19" height="28" viewBox="0 0 19 28" preserveAspectRatio="none"><path d="M3.2 2.2 Q1.8 1.2 1.8 3.2 V24.4 Q1.8 26.4 3.3 25.2 L15.4 14.9 Q16.6 13.8 15.4 12.8 Z" fill="url(#tg2)" stroke="#bdbdbd" stroke-width="1.3" stroke-linejoin="round"/></svg>
<div style="left:192px;top:1387.96px;width:20px;height:0;border-top:2px dotted #979797"></div>
<svg style="left:214px;top:1373.96px;" width="23" height="26" viewBox="0 0 23 26" preserveAspectRatio="none"><path d="M1.2 1.2 H14 L21.8 9 V24.8 H1.2 Z M14 1.2 V9 H21.8" fill="none" stroke="#555e66" stroke-width="2.2" stroke-linejoin="round"/></svg>
<div style="left:244.70px;top:1372.46px;font-size:26.14px;font-weight:400;color:#50575e;letter-spacing:0.762px;">Monument Reference Number</div>
<svg style="left:174.6px;top:1431.2px;" width="19" height="28" viewBox="0 0 19 28" preserveAspectRatio="none"><path d="M3.2 2.2 Q1.8 1.2 1.8 3.2 V24.4 Q1.8 26.4 3.3 25.2 L15.4 14.9 Q16.6 13.8 15.4 12.8 Z" fill="url(#tg2)" stroke="#bdbdbd" stroke-width="1.3" stroke-linejoin="round"/></svg>
<div style="left:192px;top:1444.0px;width:20px;height:0;border-top:2px dotted #979797"></div>
<svg style="left:214px;top:1430.0px;" width="23" height="26" viewBox="0 0 23 26" preserveAspectRatio="none"><path d="M1.2 1.2 H14 L21.8 9 V24.8 H1.2 Z M14 1.2 V9 H21.8" fill="none" stroke="#555e66" stroke-width="2.2" stroke-linejoin="round"/></svg>
<div style="left:244.70px;top:1428.50px;font-size:26.14px;font-weight:400;color:#50575e;letter-spacing:0.027px;">External Systems Cross Reference</div>
<svg style="left:174.6px;top:1487.24px;" width="19" height="28" viewBox="0 0 19 28" preserveAspectRatio="none"><path d="M3.2 2.2 Q1.8 1.2 1.8 3.2 V24.4 Q1.8 26.4 3.3 25.2 L15.4 14.9 Q16.6 13.8 15.4 12.8 Z" fill="url(#tg2)" stroke="#bdbdbd" stroke-width="1.3" stroke-linejoin="round"/></svg>
<div style="left:192px;top:1500.04px;width:20px;height:0;border-top:2px dotted #979797"></div>
<svg style="left:214px;top:1486.04px;" width="23" height="26" viewBox="0 0 23 26" preserveAspectRatio="none"><path d="M1.2 1.2 H14 L21.8 9 V24.8 H1.2 Z M14 1.2 V9 H21.8" fill="none" stroke="#555e66" stroke-width="2.2" stroke-linejoin="round"/></svg>
<div style="left:244.70px;top:1484.54px;font-size:26.14px;font-weight:400;color:#50575e;letter-spacing:0.520px;">Initial Record Compilation</div>
<div style="left:773.50px;top:407.30px;font-size:30.29px;font-weight:400;color:#34507a;letter-spacing:1.249px;-webkit-text-stroke:0.79px #34507a;">Monument Asset Name</div>
<div style="left:772px;top:452px;width:638px;height:68px;border-radius:5px;background:#8cd1c7"></div>
<div style="left:802.20px;top:471.60px;font-size:26.43px;font-weight:400;color:#2e7565;letter-spacing:0.761px;-webkit-text-stroke:0.69px #2e7565;">(This card data will define the resource name.)</div>
<div style="left:783.60px;top:580.50px;font-size:24.71px;font-weight:400;color:#555555;letter-spacing:0.263px;-webkit-text-stroke:0.64px #555555;">Asset Name</div>
<div style="left:798px;top:617px;width:1199px;height:78px;box-sizing:border-box;border:2px solid #dddddd;border-radius:4px;background:#fff"></div>
<div style="left:833.00px;top:642.50px;font-size:26.43px;font-weight:400;color:#9a9a9a;letter-spacing:0.432px;">Enter text</div>
<div style="left:752px;top:749px;width:1637px;height:295px;box-sizing:border-box;border:2px solid #dddddd;background:#f9f9f9"></div>
<div style="left:784.00px;top:778.40px;font-size:24.71px;font-weight:400;color:#555555;letter-spacing:0.385px;-webkit-text-stroke:0.64px #555555;">Name Type</div>
<div style="left:798px;top:814px;width:1526px;height:178px;background:#fefefe;"></div>
<div style="left:820px;top:834px;width:32px;height:32px;box-sizing:border-box;border:2px solid #c3cedd;background:#fff"></div>
<div style="left:862.30px;top:837.80px;font-size:26.86px;font-weight:400;color:#3f3f3f;letter-spacing:0.270px;">Alternative</div>
<div style="left:1276px;top:834px;width:32px;height:32px;box-sizing:border-box;border:2px solid #c3cedd;background:#fff"></div>
<div style="left:1318.30px;top:837.80px;font-size:26.86px;font-weight:400;color:#3f3f3f;letter-spacing:0.431px;">Former</div>
<div style="left:1734px;top:834px;width:32px;height:32px;box-sizing:border-box;border:2px solid #c3cedd;background:#fff"></div>
<div style="left:1776.30px;top:837.80px;font-size:26.86px;font-weight:400;color:#3f3f3f;letter-spacing:0.196px;">Primary</div>
<div style="left:820px;top:884px;width:32px;height:32px;box-sizing:border-box;border:2px solid #c3cedd;background:#fff"></div>
<div style="left:862.30px;top:887.80px;font-size:26.86px;font-weight:400;color:#3f3f3f;letter-spacing:0.049px;">Pseudonym</div>
<div style="left:1276px;top:884px;width:32px;height:32px;box-sizing:border-box;border:2px solid #c3cedd;background:#fff"></div>
<div style="left:1318.30px;top:887.80px;font-size:26.86px;font-weight:400;color:#3f3f3f;letter-spacing:-0.207px;">Site Name</div>
<div style="left:1734px;top:884px;width:32px;height:32px;box-sizing:border-box;border:2px solid #c3cedd;background:#fff"></div>
<div style="left:1776.30px;top:887.80px;font-size:26.86px;font-weight:400;color:#3f3f3f;letter-spacing:0.420px;">Soubriquet</div>
<div style="left:820px;top:934px;width:32px;height:32px;box-sizing:border-box;border:2px solid #c3cedd;background:#fff"></div>
<div style="left:862.30px;top:937.80px;font-size:26.86px;font-weight:400;color:#3f3f3f;letter-spacing:0.463px;">Statutory</div>
<div style="left:1276px;top:934px;width:32px;height:32px;box-sizing:border-box;border:2px solid #c3cedd;background:#fff"></div>
<div style="left:1318.30px;top:937.80px;font-size:26.86px;font-weight:400;color:#3f3f3f;letter-spacing:0.603px;">Taxonomic</div>
<div style="left:2452.60px;top:388.70px;font-size:37.14px;font-weight:400;color:#1f2a6e;letter-spacing:-1.187px;">Widget Manager</div>
<div style="left:2452px;top:454px;width:538px;height:2px;background:#c8c8c8;"></div>
<div style="left:2452.60px;top:469.30px;font-size:27.43px;font-weight:400;color:#2d3b4c;letter-spacing:-0.538px;">Widget Label</div>
<div style="left:2452px;top:508px;width:538px;height:63px;box-sizing:border-box;border:2px solid #e2e2e2;border-radius:5px;background:#fff"></div>
<div style="left:2479.70px;top:525.60px;font-size:27.43px;font-weight:400;color:#555555;letter-spacing:-0.569px;">Name Type</div>
<div style="left:2452.30px;top:610.40px;font-size:27.00px;font-weight:400;color:#2d3b4c;letter-spacing:0.392px;">Template</div>
<div style="left:2452px;top:648px;width:538px;height:63px;box-sizing:border-box;border:2px solid #e2e2e2;border-radius:5px;background:#fff"></div>
<div style="left:2479.20px;top:665.50px;font-size:27.00px;font-weight:400;color:#4f6585;letter-spacing:0.068px;">concept-checkbox-widget</div>
<svg style="left:2947px;top:675px;" width="18" height="12" viewBox="0 0 18 12" preserveAspectRatio="none"><path d="M0 0 H17 L8.5 11 Z" fill="#4f5f7a"/></svg>
<div style="left:2452.30px;top:750.40px;font-size:27.00px;font-weight:400;color:#2d3b4c;letter-spacing:0.137px;">Visibility</div>
<div style="left:2462px;top:794px;width:54px;height:30px;border-radius:15px;background:#74b86f"></div>
<div style="left:2490px;top:796px;width:26px;height:26px;border-radius:50%;background:#fff;box-shadow:1px 2px 4px rgba(0,0,0,.28)"></div>
<div style="left:2542.80px;top:793.80px;font-size:25.43px;font-weight:400;color:#2d3b4c;letter-spacing:-0.441px;">Make Widget Visible</div>
<div style="left:2542.80px;top:829.00px;font-size:25.43px;font-weight:400;color:#6683a8;letter-spacing:-0.097px;">Show this widget by default</div>
<div style="left:2474.00px;top:917.20px;font-size:27.86px;font-weight:400;color:#2d3b4c;letter-spacing:-0.474px;">Default Value</div>
<div style="left:2458px;top:957px;width:527px;height:443px;box-sizing:border-box;border:2px solid #dddddd;border-radius:4px;background:#fff"></div>
<div style="left:2482px;top:982px;width:32px;height:32px;box-sizing:border-box;border:2px solid #c3cedd;background:#fff"></div>
<div style="left:2523.50px;top:985.40px;font-size:27.43px;font-weight:400;color:#2d3b4c;letter-spacing:-0.010px;">Alternative</div>
<div style="left:2482px;top:1032px;width:32px;height:32px;box-sizing:border-box;border:2px solid #c3cedd;background:#fff"></div>
<div style="left:2523.50px;top:1035.30px;font-size:27.43px;font-weight:400;color:#2d3b4c;letter-spacing:-0.138px;">Former</div>
<div style="left:2482px;top:1082px;width:32px;height:32px;box-sizing:border-box;border:2px solid #c3cedd;background:#fff"></div>
<div style="left:2523.50px;top:1085.20px;font-size:27.43px;font-weight:400;color:#2d3b4c;letter-spacing:-0.065px;">Primary</div>
<div style="left:2482px;top:1132px;width:32px;height:32px;box-sizing:border-box;border:2px solid #c3cedd;background:#fff"></div>
<div style="left:2523.50px;top:1135.10px;font-size:27.43px;font-weight:400;color:#2d3b4c;letter-spacing:-0.365px;">Pseudonym</div>
<div style="left:2482px;top:1182px;width:32px;height:32px;box-sizing:border-box;border:2px solid #c3cedd;background:#fff"></div>
<div style="left:2523.50px;top:1185.00px;font-size:27.43px;font-weight:400;color:#2d3b4c;letter-spacing:-0.690px;">Site Name</div>
<div style="left:2482px;top:1232px;width:32px;height:32px;box-sizing:border-box;border:2px solid #c3cedd;background:#fff"></div>
<div style="left:2523.50px;top:1234.90px;font-size:27.43px;font-weight:400;color:#2d3b4c;letter-spacing:0.090px;">Soubriquet</div>
<div style="left:2482px;top:1281px;width:32px;height:32px;box-sizing:border-box;border:2px solid #c3cedd;background:#fff"></div>
<div style="left:2523.50px;top:1284.80px;font-size:27.43px;font-weight:400;color:#2d3b4c;letter-spacing:0.065px;">Statutory</div>
<div style="left:2482px;top:1331px;width:32px;height:32px;box-sizing:border-box;border:2px solid #c3cedd;background:#fff"></div>
<div style="left:2523.50px;top:1334.70px;font-size:27.43px;font-weight:400;color:#2d3b4c;letter-spacing:0.049px;">Taxonomic</div>
</div></body></html>
